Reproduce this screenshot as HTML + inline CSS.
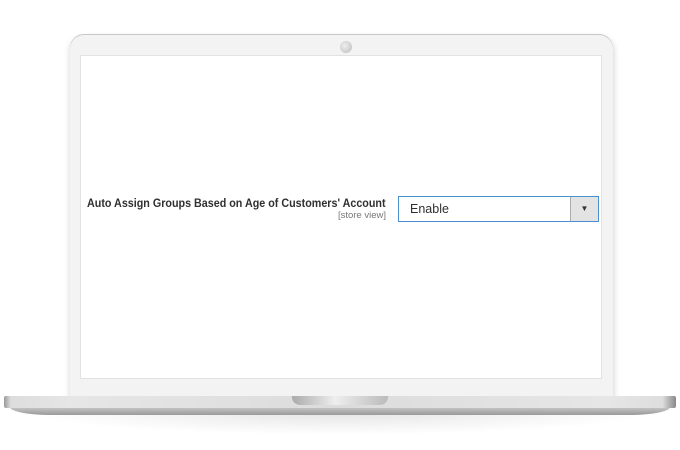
<!DOCTYPE html>
<html><head><style>
body{margin:0;width:680px;height:450px;background:#fff;position:relative;overflow:hidden;font-family:"Liberation Sans",sans-serif}
.lid{position:absolute;left:70px;top:35px;width:543px;height:362px;background:#f3f3f3;border-radius:14px 14px 0 0;box-shadow:0 -1px 0 #c8c8c8, 2px 2px 6px rgba(0,0,0,.12), -2px 2px 6px rgba(0,0,0,.08)}
.cam{position:absolute;left:340px;top:41px;width:12px;height:12px;border-radius:50%;background:radial-gradient(circle at 40% 40%,#eee,#bbb)}
.screen{position:absolute;left:81px;top:56px;width:520px;height:322px;background:#fff;box-shadow:0 0 0 1px #e2e2e2}
.base{position:absolute;left:4px;top:396px;width:672px;height:12px;background:linear-gradient(90deg,#999 0,#ddd 1%,#e6e6e6 10%,#dcdcdc 50%,#e6e6e6 90%,#ddd 98%,#888 100%);border-radius:2px}
.base2{position:absolute;left:10px;top:407px;width:660px;height:8px;background:linear-gradient(#c8c8c8,#9a9a9a);border-radius:0 0 40px 40px/0 0 8px 8px}
.shadow{position:absolute;left:30px;top:413px;width:620px;height:22px;background:radial-gradient(ellipse at 50% 0,rgba(0,0,0,.10),rgba(0,0,0,0) 70%)}
.notch{position:absolute;left:292px;top:396px;width:96px;height:9px;background:linear-gradient(90deg,#aaa,#eee 45%,#bbb);border-radius:0 0 8px 8px}
.lbl{position:absolute;right:294px;top:196px;text-align:right;font-size:12px;font-weight:bold;color:#303030;white-space:nowrap;transform:scaleX(0.895);transform-origin:right center}
.sv{position:absolute;right:294px;top:210px;font-size:9.5px;color:#777}
.sel{position:absolute;left:398px;top:196px;width:199px;height:24px;border:1px solid #4c8fd0;background:#fff;box-sizing:content-box}
.sel span{position:absolute;left:11px;top:5px;font-size:12.5px;color:#303030}
.btn{position:absolute;right:0;top:0;width:27px;height:24px;background:#e3e3e3;border-left:1px solid #adadad;font-size:8px;text-align:center;line-height:24px;color:#333}
</style></head><body>
<div class="lid"></div>
<div class="cam"></div>
<div class="screen"></div>
<div class="shadow"></div>
<div class="base2"></div>
<div class="base"></div>
<div class="notch"></div>
<div class="lbl">Auto Assign Groups Based on Age of Customers' Account</div>
<div class="sv">[store view]</div>
<div class="sel"><span>Enable</span><div class="btn">▼</div></div>
</body></html>
